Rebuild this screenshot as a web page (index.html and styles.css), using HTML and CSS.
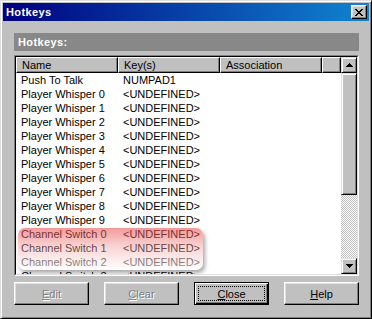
FILE: index.html
```html
<!DOCTYPE html>
<html lang="en">
<head>
    <meta charset="UTF-8">
    <title>Hotkeys</title>
    <link rel="stylesheet" href="styles.css">
</head>
<body>
    <div class="window">
        <div class="titlebar">
            <span class="title">Hotkeys</span>
            <button class="title-close">
                <svg width="8" height="7" viewBox="0 0 8 7" shape-rendering="crispEdges">
                    <path d="M0 0h2v1H0zM6 0h2v1H6zM1 1h2v1H1zM5 1h2v1H5zM2 2h4v1H2zM3 3h2v1H3zM2 4h4v1H2zM1 5h2v1H1zM5 5h2v1H5zM0 6h2v1H0zM6 6h2v1H6z" fill="#000"/>
                </svg>
            </button>
        </div>

        <div class="content">
            <div class="group-head">Hotkeys:</div>

            <div class="listview">
                <div class="lv-inner">
                    <div class="lv-main">
                        <div class="lv-header">
                            <div class="col">Name</div>
                            <div class="col">Key(s)</div>
                            <div class="col">Association</div>
                            <div class="col filler"></div>
                        </div>
                        <div class="lv-rows">
                            <div class="row"><span>Push To Talk</span><span>NUMPAD1</span><span></span></div>
                            <div class="row"><span>Player Whisper 0</span><span>&lt;UNDEFINED&gt;</span><span></span></div>
                            <div class="row"><span>Player Whisper 1</span><span>&lt;UNDEFINED&gt;</span><span></span></div>
                            <div class="row"><span>Player Whisper 2</span><span>&lt;UNDEFINED&gt;</span><span></span></div>
                            <div class="row"><span>Player Whisper 3</span><span>&lt;UNDEFINED&gt;</span><span></span></div>
                            <div class="row"><span>Player Whisper 4</span><span>&lt;UNDEFINED&gt;</span><span></span></div>
                            <div class="row"><span>Player Whisper 5</span><span>&lt;UNDEFINED&gt;</span><span></span></div>
                            <div class="row"><span>Player Whisper 6</span><span>&lt;UNDEFINED&gt;</span><span></span></div>
                            <div class="row"><span>Player Whisper 7</span><span>&lt;UNDEFINED&gt;</span><span></span></div>
                            <div class="row"><span>Player Whisper 8</span><span>&lt;UNDEFINED&gt;</span><span></span></div>
                            <div class="row"><span>Player Whisper 9</span><span>&lt;UNDEFINED&gt;</span><span></span></div>
                            <div class="row"><span>Channel Switch 0</span><span>&lt;UNDEFINED&gt;</span><span></span></div>
                            <div class="row"><span>Channel Switch 1</span><span>&lt;UNDEFINED&gt;</span><span></span></div>
                            <div class="row"><span>Channel Switch 2</span><span>&lt;UNDEFINED&gt;</span><span></span></div>
                            <div class="row"><span>Channel Switch 3</span><span>&lt;UNDEFINED&gt;</span><span></span></div>
                        </div>
                        <!-- highlight over the channel switch rows -->
                        <div class="highlight"></div>
                    </div>

                    <div class="scrollbar">
                        <div class="sb-btn">
                            <svg width="7" height="4" viewBox="0 0 7 4" shape-rendering="crispEdges">
                                <path d="M3 0h1v1H3zM2 1h3v1H2zM1 2h5v1H1zM0 3h7v1H0z" fill="#000"/>
                            </svg>
                        </div>
                        <div class="sb-thumb"></div>
                        <div class="sb-track"></div>
                        <div class="sb-btn">
                            <svg width="7" height="4" viewBox="0 0 7 4" shape-rendering="crispEdges">
                                <path d="M0 0h7v1H0zM1 1h5v1H1zM2 2h3v1H2zM3 3h1v1H3z" fill="#000"/>
                            </svg>
                        </div>
                    </div>
                </div>
            </div>

            <div class="buttons">
                <button class="btn disabled"><u>E</u>dit</button>
                <button class="btn disabled"><u>C</u>lear</button>
                <button class="btn default"><u>C</u>lose</button>
                <button class="btn"><u>H</u>elp</button>
            </div>
        </div>
    </div>
</body>
</html>
```

FILE: styles.css
```css
/* classic dialog look */
body {
    margin: 0;
    padding: 0;
    background: #c0c0c0;
}

.window {
    width: 372px;
    height: 319px;
    box-sizing: border-box;
    padding: 2px;
    background: #c0c0c0;
    border: 1px solid;
    border-color: #dfdfdf #000 #000 #dfdfdf;
    box-shadow: inset 1px 1px #fff, inset -1px -1px #808080;
    font-family: "Liberation Sans", Arial, sans-serif;
    font-size: 11px;
    color: #000;
}

.titlebar {
    height: 18px;
    display: flex;
    align-items: center;
    justify-content: space-between;
    padding: 0 2px 0 3px;
    background: linear-gradient(90deg, #000080, #1084d0);
}

.title {
    color: #fff;
    font-weight: bold;
    letter-spacing: 0.4px;
}

.title-close {
    width: 16px;
    height: 14px;
    padding: 0;
    display: flex;
    align-items: center;
    justify-content: center;
    background: #c0c0c0;
    border: 1px solid;
    border-color: #fff #000 #000 #fff;
    box-shadow: inset -1px -1px #808080, inset 1px 1px #dfdfdf;
}

.content {
    padding: 12px 10px 0 11px;
}

.group-head {
    height: 18px;
    line-height: 18px;
    padding-left: 4px;
    background: #888;
    color: #fff;
    font-weight: bold;
    letter-spacing: 0.4px;
}

.listview {
    margin-top: 4px;
    height: 221px;
    box-sizing: border-box;
    border: 1px solid;
    border-color: #808080 #fff #fff #808080;
}

.lv-inner {
    height: 100%;
    box-sizing: border-box;
    border: 1px solid;
    border-color: #000 #dfdfdf #dfdfdf #000;
    background: #fff;
    display: flex;
}

.lv-main {
    flex: 1;
    position: relative;
    overflow: hidden;
    display: flex;
    flex-direction: column;
}

.lv-header {
    display: flex;
    height: 16px;
    flex-shrink: 0;
}

.col {
    width: 102px;
    box-sizing: border-box;
    padding-left: 5px;
    line-height: 14px;
    background: #c0c0c0;
    border: 1px solid;
    border-color: #fff #000 #000 #fff;
    box-shadow: inset -1px -1px #808080;
}

.col.filler {
    width: auto;
    flex: 1;
}

.lv-rows {
    flex: 1;
    overflow: hidden;
}

.row {
    display: flex;
    height: 14px;
    line-height: 14px;
}

.row span {
    width: 102px;
    box-sizing: border-box;
    padding-left: 5px;
    white-space: nowrap;
    overflow: hidden;
}

.highlight {
    position: absolute;
    left: 2px;
    top: 171px;
    width: 185px;
    height: 42px;
    border-radius: 7px;
    background: linear-gradient(180deg, rgba(232, 70, 70, 0.55), rgba(240, 150, 150, 0.4) 45%, rgba(255, 255, 255, 0.6));
    box-shadow: 2px 3px 4px rgba(0, 0, 0, 0.35);
}

.scrollbar {
    width: 16px;
    display: flex;
    flex-direction: column;
}

.sb-btn,
.sb-thumb {
    box-sizing: border-box;
    background: #c0c0c0;
    border: 1px solid;
    border-color: #dfdfdf #000 #000 #dfdfdf;
    box-shadow: inset 1px 1px #fff, inset -1px -1px #808080;
}

.sb-btn {
    height: 16px;
    display: flex;
    align-items: center;
    justify-content: center;
}

.sb-thumb {
    height: 122px;
}

.sb-track {
    flex: 1;
    background: repeating-conic-gradient(#fff 0 25%, #c0c0c0 0 50%) 0 0 / 2px 2px;
}

.buttons {
    display: flex;
    gap: 15px;
    margin-top: 6px;
}

.btn {
    width: 75px;
    height: 23px;
    padding: 0;
    position: relative;
    font-family: "Liberation Sans", Arial, sans-serif;
    font-size: 11px;
    color: #000;
    background: #c0c0c0;
    border: 1px solid;
    border-color: #fff #000 #000 #fff;
    box-shadow: inset -1px -1px #808080, inset 1px 1px #dfdfdf;
}

.btn.disabled {
    color: #808080;
    text-shadow: 1px 1px #fff;
}

.btn.default {
    border-color: #000;
    box-shadow: inset 1px 1px #fff, inset -1px -1px #000, inset -2px -2px #808080;
}

.btn.default::after {
    content: "";
    position: absolute;
    left: 3px;
    top: 3px;
    right: 3px;
    bottom: 3px;
    border: 1px dotted #000;
}
```
